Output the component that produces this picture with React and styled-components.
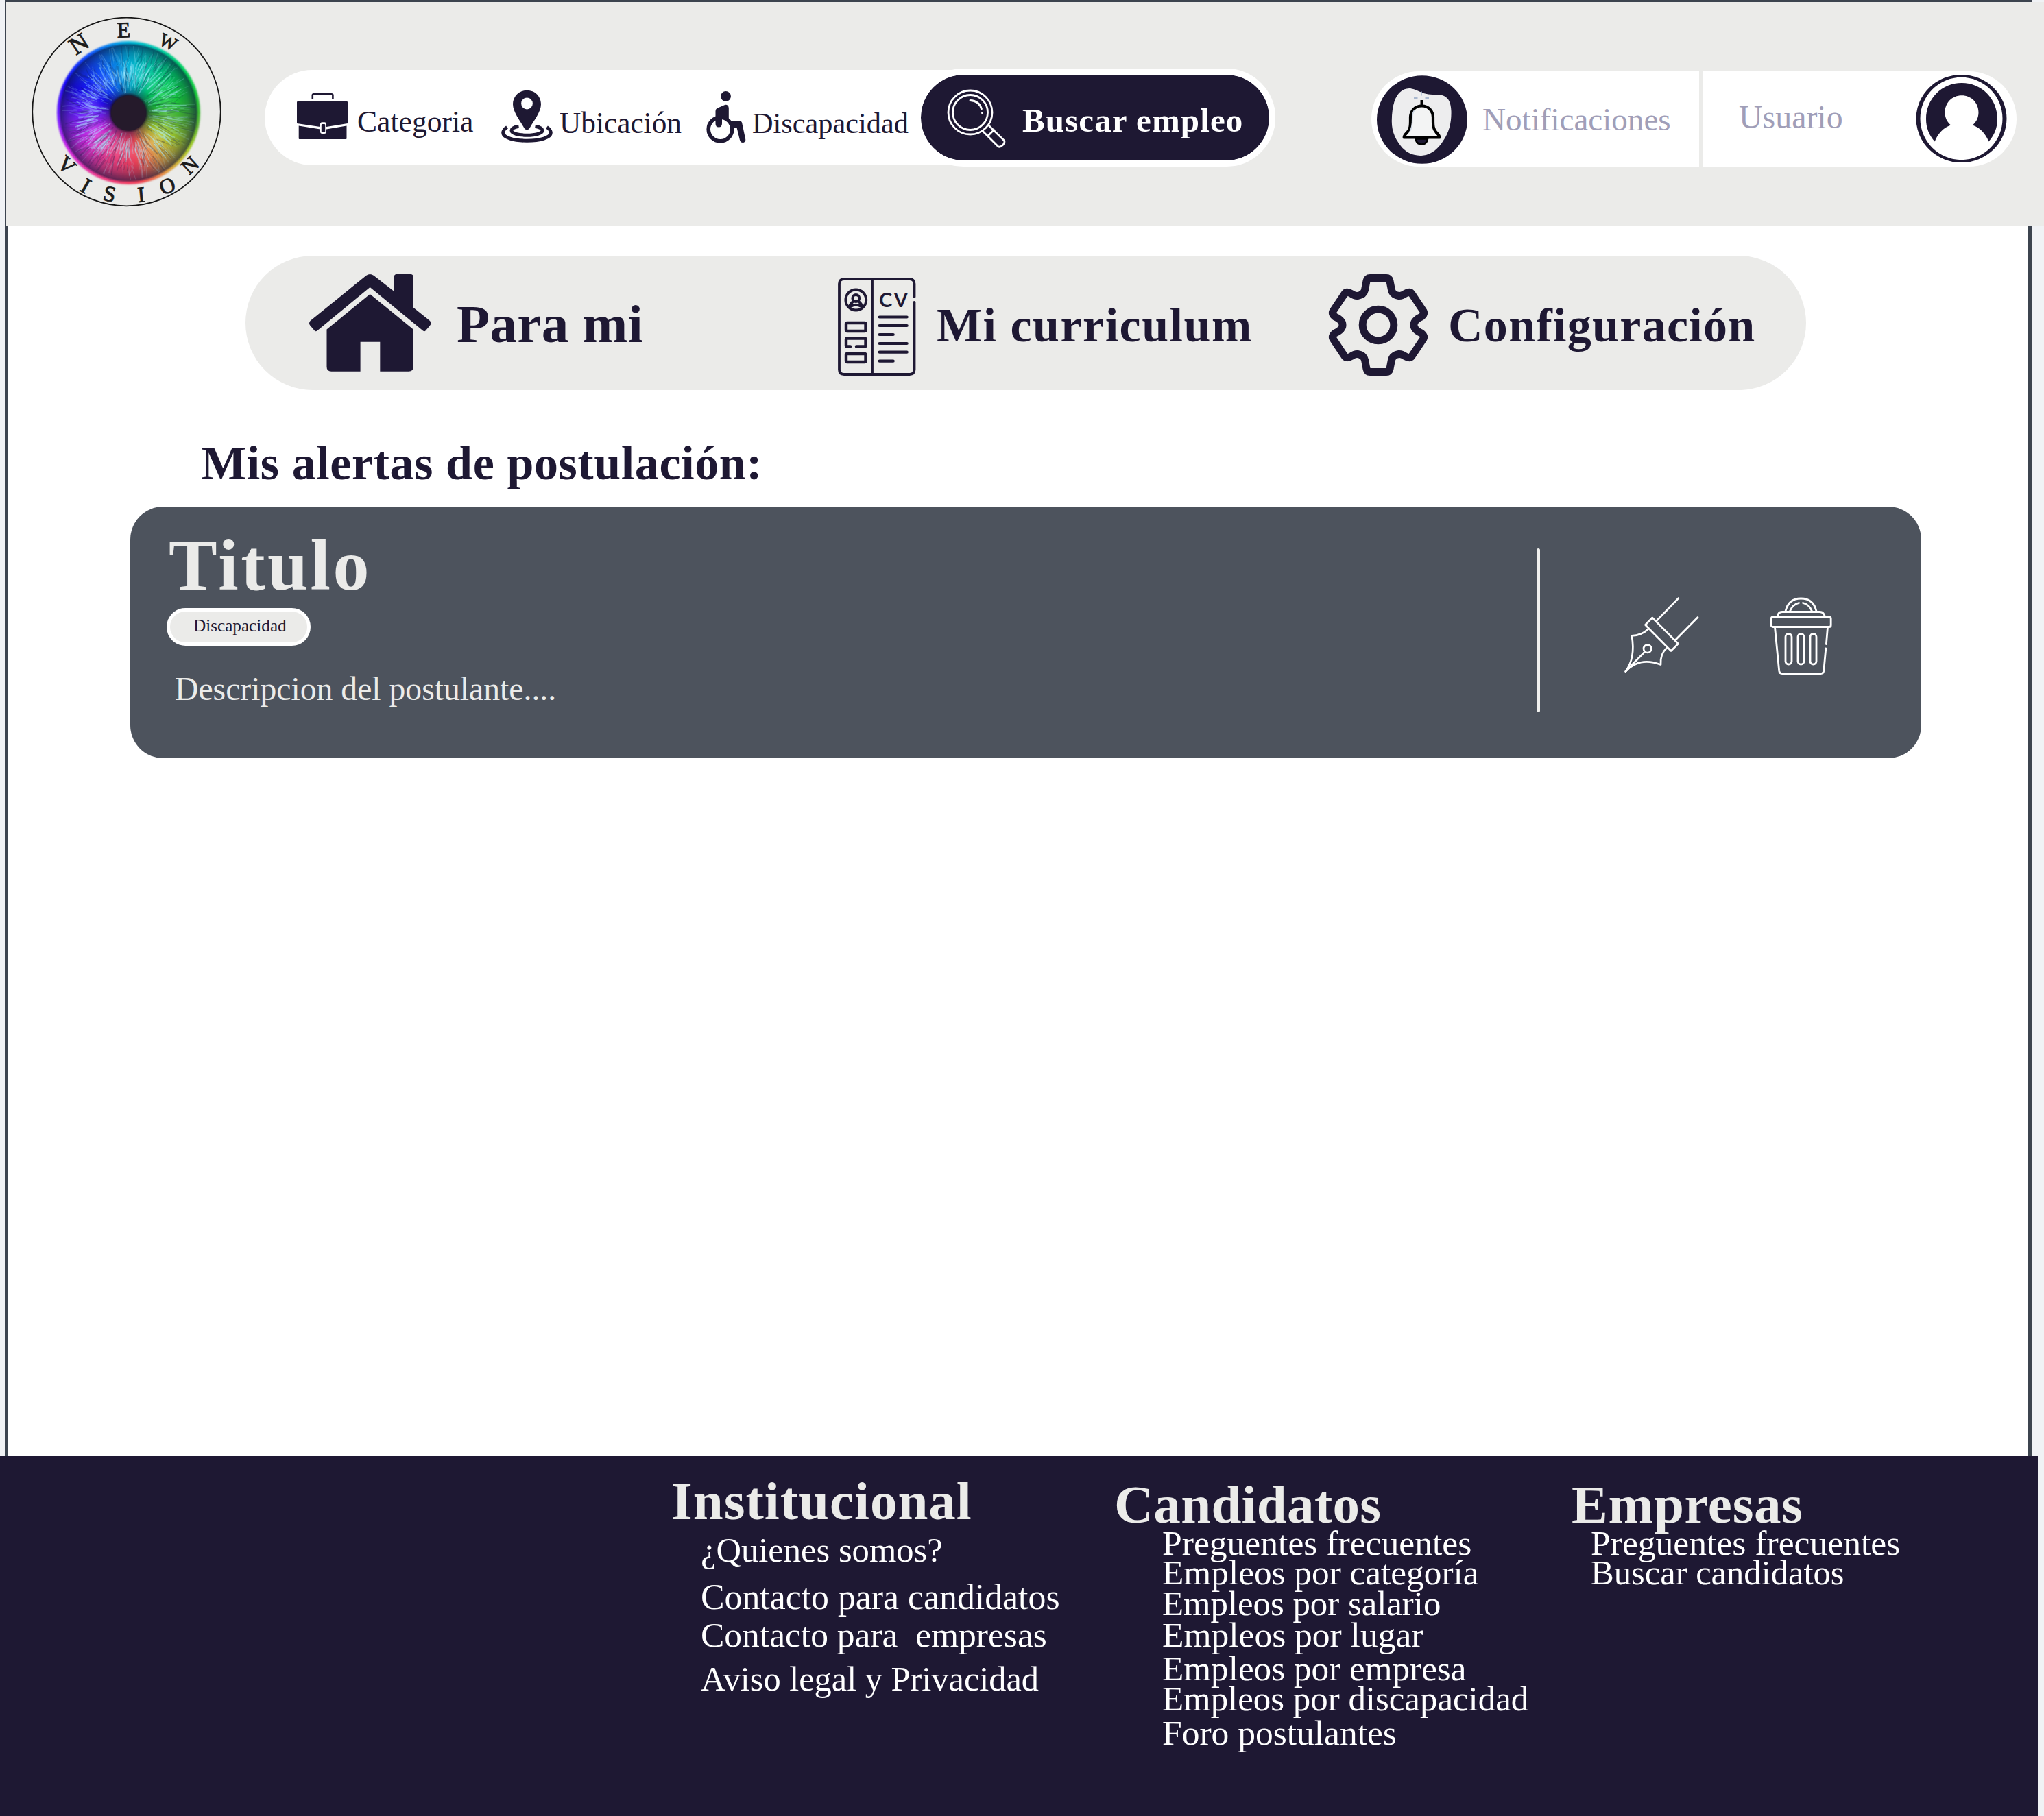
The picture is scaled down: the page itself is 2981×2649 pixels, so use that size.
import React from "react";
import styled, { createGlobalStyle } from "styled-components";

const navy = "#1e1833";
const mist = "#ebebe9";
const edge = "#3c444f";

const GlobalStyle = createGlobalStyle`
  * { box-sizing: border-box; }
  body { margin: 0; background: #f0f2f5; }
  h1, h2, h3, p, ul { margin: 0; padding: 0; }
  svg { display: block; flex: none; }
`;

const Page = styled.div`
  width: 2981px;
  height: 2649px;
  display: flex;
  flex-direction: column;
  overflow: hidden;
  background: #f0f2f5;
  color: ${navy};
  font-family: "Liberation Serif", "Times New Roman", serif;
`;

const TopRule = styled.div`
  height: 3px;
  flex: none;
  width: 2956px;
  margin-left: 7px;
  background: ${edge};
`;

const Header = styled.header`
  height: 327px;
  flex: none;
  display: flex;
  align-items: flex-start;
  margin-left: 7px;
  padding-left: 37px;
  border-left: 2px solid ${edge};
  background: ${mist};
`;

const Logo = styled.div`
  position: relative;
  width: 278px;
  height: 278px;
  margin-top: 22px;
  flex: none;
`;

const Iris = styled.div`
  position: absolute;
  left: 37px;
  top: 35px;
  width: 209px;
  height: 209px;
  border-radius: 50%;
  background: conic-gradient(
    #00b4dc, #00c8a8 25deg, #00d060 50deg, #18c838 75deg, #58b030 100deg,
    #a8cc28 120deg, #e0a040 145deg, #f04058 172deg, #ec3c88 205deg,
    #d028e0 238deg, #7a20ff 265deg, #1808f8 295deg, #1050ff 325deg, #00b4dc
  );
  filter: blur(1px);
`;

const IrisShade = styled.div`
  position: absolute;
  left: 40px;
  top: 38px;
  width: 203px;
  height: 203px;
  border-radius: 50%;
  background: radial-gradient(
    circle closest-side,
    rgba(24, 16, 40, 0.9) 25%,
    rgba(20, 20, 60, 0.45) 29%,
    rgba(20, 20, 60, 0.1) 40%,
    rgba(255, 255, 255, 0.14) 55%,
    rgba(10, 20, 60, 0.05) 72%,
    rgba(10, 20, 60, 0.28) 86%,
    rgba(10, 20, 60, 0.6) 97%,
    rgba(10, 20, 60, 0.1) 100%
  );
`;

const LogoArt = styled.svg`
  position: absolute;
  inset: 0;
`;

const Fibres = styled.g`
  filter: blur(0.6px);
`;

const LogoLetter = styled.text`
  font-family: "Liberation Serif", serif;
  font-size: ${(p) => p.$size}px;
  text-anchor: middle;
  fill: #1b1b1b;
  stroke: #1b1b1b;
  stroke-width: 0.9px;
`;

const SearchBar = styled.div`
  width: 1474px;
  height: 139px;
  flex: none;
  margin: 99px 0 0 62px;
  display: flex;
  align-items: flex-start;
  border-radius: 70px;
  background: #fff;
`;

const Filter = styled.div`
  display: flex;
  align-items: flex-start;
  flex: none;
  width: ${(p) => p.$width}px;
  padding-left: ${(p) => p.$inset || 0}px;

  svg { margin-top: ${(p) => p.$iconTop}px; }
`;

const Label = styled.span`
  white-space: pre;
  flex: none;
  font-size: ${(p) => p.$size}px;
  line-height: ${(p) => Math.floor(p.$size)}px;
  font-weight: ${(p) => (p.$bold ? 700 : 400)};
  letter-spacing: ${(p) => (p.$track ? `${p.$track}px` : "normal")};
  margin: ${(p) => p.$top}px 0 0 ${(p) => p.$left || 0}px;
  color: ${(p) => p.$tone || "inherit"};
`;

const SearchButton = styled.button`
  width: 526px;
  height: 143px;
  flex: none;
  align-self: center;
  display: flex;
  align-items: flex-start;
  padding: 20px 0 0 37px;
  border: 9px solid #fff;
  border-radius: 72px;
  background: ${navy};
  background-clip: padding-box;
  color: #fff;
  font-family: inherit;
`;

const Account = styled.div`
  width: 941px;
  height: 139px;
  flex: none;
  margin: 101px 0 0 140px;
  display: flex;
  border-radius: 70px;
  background: #fff;
`;

const AccountPart = styled.div`
  display: flex;
  align-items: flex-start;
  padding-left: ${(p) => p.$inset}px;
  ${(p) => (p.$last
    ? "flex: 1; justify-content: space-between; padding-right: 14px;"
    : `width: 483px; border-right: 5px solid ${mist};`)}

  svg { margin-top: ${(p) => p.$iconTop}px; }
`;

const Main = styled.main`
  width: 2956px;
  height: 1794px;
  flex: none;
  margin-left: 7px;
  padding-top: 43px;
  border: 0 solid ${edge};
  border-width: 0 5px;
  background: #fff;
`;

const Tabs = styled.nav`
  width: 2276px;
  height: 196px;
  margin-left: 346px;
  display: flex;
  padding-left: 93px;
  border-radius: 98px;
  background: ${mist};
`;

const Tab = styled.div`
  width: ${(p) => p.$width}px;
  flex: none;
  display: flex;
  align-items: flex-start;

  svg { margin-top: ${(p) => p.$iconTop}px; }
`;

const SectionTitle = styled.h2`
  margin: 72px 0 28px 281px;
  font-size: 70px;
  line-height: 70px;
  letter-spacing: 0.6px;
`;

const Card = styled.article`
  width: 2612px;
  height: 367px;
  margin-left: 178px;
  display: flex;
  border-radius: 48px;
  background: #4d535d;
  color: ${mist};
`;

const CardBody = styled.div`
  width: 2051px;
  flex: none;
  padding: 33px 0 0 53px;
`;

const CardTitle = styled.h3`
  margin-left: 3px;
  font-size: 106px;
  line-height: 106px;
  letter-spacing: 3.5px;
`;

const Badge = styled.div`
  width: 210px;
  height: 55px;
  margin-top: 9px;
  padding: 8px 0 0 34px;
  border: 5.5px solid #fff;
  border-radius: 28px;
  background: ${mist};
  color: ${navy};
  font-size: 25.2px;
  line-height: 25px;
`;

const CardText = styled.p`
  margin: 39px 0 0 12px;
  font-size: 47.7px;
  line-height: 47px;
`;

const Divider = styled.div`
  width: 5px;
  height: 239px;
  margin-top: 61px;
  border-radius: 3px;
  background: #f0f0ee;
`;

const Actions = styled.div`
  display: flex;
  align-items: flex-start;
  gap: 101px;
  padding: 131px 0 0 122px;
`;

const Footer = styled.footer`
  width: 2972px;
  height: 525px;
  flex: none;
  display: grid;
  grid-template-columns: 646px 667px 1fr;
  align-items: start;
  padding-left: 979px;
  background: ${navy};
`;

const Column = styled.section`
  padding-top: ${(p) => p.$top}px;
`;

const ColumnTitle = styled.h2`
  font-size: 79px;
  line-height: 68px;
  letter-spacing: ${(p) => p.$track}px;
  color: ${mist};
`;

const Links = styled.ul`
  list-style: none;
  padding-left: ${(p) => p.$indent}px;
`;

const LinkItem = styled.li`
  margin-top: ${(p) => p.$gap}px;
  font-size: ${(p) => p.$size}px;
  line-height: 36px;
  white-space: pre;
  color: #fff;
`;

const letters = [
  ["N", 70, 43, -33, 36], ["E", 134.5, 22, -2, 32], ["W", 200, 38, 26, 27],
  ["V", 51, 219, 43, 32], ["I", 79, 249, 30, 32], ["S", 114, 261, 12, 32],
  ["I", 160, 262, -5, 32], ["O", 198, 249, -20, 31], ["N", 231, 219, -42, 31],
];

const noise = (n) => {
  const v = Math.sin(n * 127.1 + 11.7) * 43758.5453;
  return v - Math.floor(v);
};

const fibres = Array.from({ length: 620 }, (_, i) => {
  const a = noise(i) * Math.PI * 2;
  const start = 28 + noise(i + 700) * 52;
  const end = Math.min(97, start + 8 + noise(i + 1400) * 22);
  const bend = a + (noise(i + 2100) - 0.5) * 0.16;
  const dark = i % 3 === 0;
  const near = Math.abs((start + end) / 2 - 58) < 14;
  return {
    d: `M${141.5 + Math.cos(a) * start} ${139.5 + Math.sin(a) * start}L${141.5 + Math.cos(bend) * end} ${139.5 + Math.sin(bend) * end}`,
    stroke: dark ? "#10204a" : "#a8ecff",
    opacity: dark ? 0.22 : near ? 0.4 : 0.15,
    width: 0.8 + noise(i + 2800) * 1.2,
  };
});

const BrandLogo = () => (
  <Logo>
    <Iris />
    <IrisShade />
    <LogoArt width="278" height="278" viewBox="0 0 278 278">
      <circle cx="138.5" cy="138" r="137.3" fill="none" stroke="#151515" strokeWidth="1.8" />
      <Fibres>
        {fibres.map((f, i) => (
          <path key={i} d={f.d} stroke={f.stroke} strokeOpacity={f.opacity} strokeWidth={f.width} strokeLinecap="round" />
        ))}
      </Fibres>
      <circle cx="141.5" cy="140" r="25.5" fill="#251a2b" />
      {letters.map(([ch, x, y, turn, size], i) => (
        <LogoLetter key={i} $size={size} transform={`translate(${x} ${y - 3}) rotate(${turn})`} y="10.5">{ch}</LogoLetter>
      ))}
    </LogoArt>
  </Logo>
);

const Briefcase = () => (
  <svg width="77" height="71" viewBox="0 0 77 71">
    <path d="M23.8 11V5q0-1.8 1.8-1.8h26q1.8 0 1.8 1.8v6" fill="none" stroke={navy} strokeWidth="2.6" />
    <path d="M1 15q0-1 1-1h72q1 0 1 1v31L44 51V47q0-2.800-2.800-2.800h-3.400Q35 44.200 35 47v4L1 46z" fill={navy} />
    <path d="M3.700 49.500L35 54.500V58q0 3 3 3h3q3 0 3-3v-3.500l29.500-5V68q0 1-1 1H4.700q-1 0-1-1z" fill={navy} />
    <rect x="36.800" y="47" width="5.400" height="12" rx="1.200" fill={navy} />
  </svg>
);

const MapPin = () => (
  <svg width="75" height="77" viewBox="0 0 75 77">
    <path d="M37.500 .8C26 .8 17 9.500 17 21c0 11 10.500 24 16 34 2.500 4.500 6.500 4.500 9 0 5.500-10 16-23 16-34C58 9.500 49 .8 37.500 .8z" fill={navy} />
    <circle cx="37.500" cy="20" r="8.400" fill="#fff" />
    <g fill="none" stroke={navy} strokeWidth="5">
      <path d="M25.500 53.200C18 54.500 15 57 15 59.200c0 4.200 10 7 22.500 7S60 63.400 60 59.200c0-2.200-3-4.700-10.500-6" />
      <path d="M8.500 54.500C4 57.500 2.700 60 2.700 62.800c0 6.800 15.300 11.400 34.800 11.400s34.800-4.600 34.800-11.400c0-2.800-1.300-5.300-5.800-8.300" />
    </g>
  </svg>
);

const Wheelchair = () => (
  <svg width="60" height="77" viewBox="0 0 60 77">
    <circle cx="29.500" cy="8.500" r="7.400" fill={navy} />
    <circle cx="21.500" cy="56.500" r="17.300" fill="none" stroke={navy} strokeWidth="5.600" />
    <path d="M27 21.500Q30 19.800 32.500 22q1.300 1.300 1.300 4V44H49q3.500 0 4.200 3.500l5 23.500q.6 4-3 5-4 .7-5.200-3.500L45.500 54H40Q34.500 41 24 39.500V48q0 5.500-4.800 5.500T14.500 48V30q0-2.500 2-4z" fill={navy} />
  </svg>
);

const Magnifier = () => (
  <svg width="88" height="88" viewBox="0 0 88 88" fill="none" stroke="#fff" strokeWidth="2.800" strokeLinecap="round" strokeLinejoin="round">
    <circle cx="35" cy="35" r="32" />
    <circle cx="35" cy="35" r="25.500" />
    <path d="M35 17.500Q48 18 51.500 30M52.500 35.500v.6" />
    <path d="M53 62l23 23q3 1 6.500-2.500T84.500 76L62 54M61 69l8.500-8.500" />
  </svg>
);

const BellBadge = () => (
  <svg width="132" height="129" viewBox="0 0 132 129">
    <ellipse cx="66" cy="64.500" rx="66" ry="64.300" fill={navy} />
    <path d="M21.800 66C22 48 25 34 32.600 25.500 38 20 45 18 51 19.500c9 2 14 6.500 24 8 8 1.200 16-.5 23 2.500 7 3.500 10 10 10.500 22 .5 16-3 31-11.500 43-7 11.500-17 20.500-30 21.700C53 118 42 112 35 103 26 92 21.500 80 21.800 66z" fill="#ededee" />
    <path d="M54 32h5.500v3H54zM70.500 32H76v3h-5.500zM64 23.500h1.800v6H64z" fill="#a9b8cf" />
    <path d="M65.500 44.500c-10.500 0-16.500 8-16.500 17 0 11 .5 16-5 22-3 3-4.500 4-4.300 7h51.600c.2-3-1.300-4-4.300-7-5.500-6-5-11-5-22 0-9-6-17-16.500-17z" fill="#f3f4f4" stroke="#000" strokeWidth="4.200" strokeLinejoin="round" />
    <path d="M65.500 36v8" stroke="#000" strokeWidth="4" />
    <path d="M54.500 51q-3 5-2.800 12 .3 13-4.200 20" fill="none" stroke="#ccd6e2" strokeWidth="1.500" />
    <path d="M56.500 92.500c1 5.500 4.500 8 8.800 8s7.800-2.500 8.800-8z" fill={navy} stroke="#000" strokeWidth="2.500" />
  </svg>
);

const UserBadge = () => (
  <svg width="132" height="128" viewBox="0 0 132 128">
    <path fillRule="evenodd" d="M65.500 0a66 64 0 1 1 0 128a66 64 0 1 1 0-128zM65.500 3.800a60 60.200 0 1 0 0 120.400a60 60.200 0 1 0 0-120.400z" fill={navy} />
    <path d="M26.700 97.500C18.500 88 14 78 14 64.500 14 35 37 12 66 12s52 23 52 52.500c0 13.500-4.500 23.500-12.700 33C101 86 93 77.500 82 73.500c5.500-5 8.500-11 8.500-18.500C90.500 41 80 30.300 66 30.300S41.500 41 41.500 55c0 7.500 3 13.500 8.500 18.500C39 77.500 31 86 26.700 97.500z" fill={navy} />
  </svg>
);

const House = () => (
  <svg width="178" height="144" viewBox="0 0 178 144" fill={navy}>
    <path d="M83 3q5.600-4 11.200 0l29.500 23V5q0-4 4-4h20q4 0 4 4v44.500L176 69q3 3.500 0 7l-6.500 7.500q-1.500 1.500-3.500 0L88.600 20 11.500 83.500q-2 1.500-3.500 0L1.500 76q-3-3.500 0-7z" />
    <path d="M88.600 30l63.200 51.500V136q0 6.700-6.700 6.700h-41.800v-43H74.600v43H32.200q-6.700 0-6.700-6.700V81.500z" />
  </svg>
);

const CvInitials = styled.text`
  font-family: Lato, sans-serif;
  font-size: 29px;
  font-weight: 700;
  letter-spacing: 2.5px;
`;

const Curriculum = () => (
  <svg width="116" height="145" viewBox="0 0 116 145" fill="none" stroke={navy} strokeWidth="3.800" strokeLinecap="round">
    <path d="M112.500 29V10q0-7-7-7H10q-7 0-7 7v125q0 7 7 7h95.500q7 0 7-7V37M51 3v139" />
    <circle cx="27.300" cy="33.500" r="15" />
    <circle cx="27.300" cy="31" r="5" />
    <path d="M17.500 44q1.500-5 6-8.500M37 44q-1.500-5-6-8.500M19.500 43q7.800-4.500 15.600 0" />
    <path d="M61.700 58.500h40M61.700 71h40M61.700 84h20M61.700 97h40M61.700 109.700h40M61.700 122.700h20" strokeWidth="4.200" />
    <rect x="13" y="67" width="28.500" height="12" rx="1.500" strokeWidth="4.400" />
    <rect x="13" y="112" width="28.500" height="12" rx="1.500" strokeWidth="4.400" />
    <path d="M19 101.500h-4.500q-1.500 0-1.500-1.500v-9q0-1.500 1.500-1.500H40q1.500 0 1.500 1.500v9q0 1.500-1.500 1.500H28" strokeWidth="4.400" />
    <CvInitials x="61" y="44" fill={navy} stroke="none">CV</CvInitials>
  </svg>
);

const Gear = () => (
  <svg width="147" height="150" viewBox="0 0 147 150" fill="none" stroke={navy} strokeWidth="11" strokeLinejoin="round">
    <path d="M61 6.500H85Q89 6.500 90 11l2.500 13Q94 31 103 32.500q4 .5 9-3 7-4 10 0L139 55q2 4-3 8-11 5-11 12t11 12q5 4 3 8l-17 25.500q-3 4-10 0-5-3.500-9-3Q94 119 92.500 126L90 139q-1 4.500-5 4.500H61q-4 0-5-4.500L53.500 126Q52 119 43 117.500q-4-.5-9 3-7 4-10 0L7 95q-2-4 3-8 11-5 11-12T10 63q-5-4-3-8L24 29.500q3-4 10 0 5 3.500 9 3Q52 31 53.500 24L56 11q1-4.500 5-4.500z" />
    <circle cx="73" cy="75" r="22.800" />
  </svg>
);

const Pen = () => (
  <svg width="112" height="113" viewBox="0 0 112 113" fill="none" stroke="#fff" strokeWidth="2.700" strokeLinecap="round" strokeLinejoin="round">
    <path d="M80 2.500L48 35.500M108 30.500L75 64M41.700 31L31.500 41.500 69 79.500 79.500 69z" />
    <path d="M36 47.500Q26 57 11.800 57.300 17.500 90 2.700 109.500 23 87.500 54 99.500 53 84 62.500 75.500" />
    <circle cx="34.700" cy="76.300" r="5.700" />
    <path d="M2.700 109.500L30.500 81" />
  </svg>
);

const Trash = () => (
  <svg width="92" height="116" viewBox="0 0 92 116" fill="none" stroke="#fff" strokeWidth="2.800" strokeLinecap="round" strokeLinejoin="round">
    <path d="M23 21.500C26 9 34 3 45.500 3S65 9 68 21.500M29.500 21.500Q33 12 42.500 9.500M48.500 9.500Q58 12 61.500 21.500" />
    <path d="M11 30Q12 22.500 18 22.500h55q6 0 7.500 7.500" />
    <rect x="2.200" y="30" width="87" height="14.500" rx="2.500" />
    <path d="M7.500 45L13.700 108.500q.6 4 4.300 4h56.500q3.700 0 4.300-4L81.800 76M84.500 45L82.400 69.500" />
    <rect x="23" y="54.500" width="9" height="44.500" rx="4.500" />
    <rect x="41" y="54.500" width="9" height="44.500" rx="4.500" />
    <rect x="59" y="54.500" width="9" height="44.500" rx="4.500" />
  </svg>
);

const footerColumns = [
  {
    title: "Institucional", top: 32, track: 1, indent: 43,
    links: [
      ["¿Quienes somos?", 19, 50.6], ["Contacto para candidatos", 33, 51.8],
      ["Contacto para  empresas", 19, 51.5], ["Aviso legal y Privacidad", 28, 50.4],
    ],
  },
  {
    title: "Candidatos", top: 37, track: 0.3, indent: 70,
    links: [
      ["Preguentes frecuentes", 4, 51.6], ["Empleos por categoría", 7, 51.3],
      ["Empleos por salario", 9, 50.8], ["Empleos por lugar", 10, 51.5],
      ["Empleos por empresa", 13, 51.2], ["Empleos por discapacidad", 8, 50.9],
      ["Foro postulantes", 14, 51.5],
    ],
  },
  {
    title: "Empresas", top: 37, track: 0.7, indent: 28,
    links: [["Preguentes frecuentes", 4, 51.6], ["Buscar candidatos", 7, 50.6]],
  },
];

export default function App() {
  return (
    <Page>
      <GlobalStyle />
      <TopRule />
      <Header>
        <BrandLogo />
        <SearchBar>
          <Filter $width={345} $inset={46} $iconTop={32}>
            <Briefcase />
            <Label $size={43.6} $top={54} $left={12}>Categoria</Label>
          </Filter>
          <Filter $width={298} $iconTop={29}>
            <MapPin />
            <Label $size={43.3} $top={56} $left={10}>Ubicación</Label>
          </Filter>
          <Filter $width={305} $iconTop={30}>
            <Wheelchair />
            <Label $size={42.3} $top={57} $left={8}>Discapacidad</Label>
          </Filter>
          <SearchButton>
            <Magnifier />
            <Label $size={49} $bold $track={1.1} $top={22} $left={23}>Buscar empleo</Label>
          </SearchButton>
        </SearchBar>
        <Account>
          <AccountPart $inset={8} $iconTop={6}>
            <BellBadge />
            <Label $size={47.1} $top={47} $left={22} $tone="#a09eb8">Notificaciones</Label>
          </AccountPart>
          <AccountPart $last $inset={53} $iconTop={5}>
            <Label $size={47.9} $top={43} $tone="#a09eb8">Usuario</Label>
            <UserBadge />
          </AccountPart>
        </Account>
      </Header>
      <Main>
        <Tabs>
          <Tab $width={770} $iconTop={26}>
            <House />
            <Label $size={79} $bold $track={0.3} $top={60} $left={37}>Para mi</Label>
          </Tab>
          <Tab $width={716} $iconTop={31}>
            <Curriculum />
            <Label $size={70} $bold $track={1.5} $top={67} $left={29}>Mi curriculum</Label>
          </Tab>
          <Tab $width={640} $iconTop={26}>
            <Gear />
            <Label $size={70} $bold $track={1.3} $top={67} $left={28}>Configuración</Label>
          </Tab>
        </Tabs>
        <SectionTitle>Mis alertas de postulación:</SectionTitle>
        <Card>
          <CardBody>
            <CardTitle>Titulo</CardTitle>
            <Badge>Discapacidad</Badge>
            <CardText>Descripcion del postulante....</CardText>
          </CardBody>
          <Divider />
          <Actions>
            <Pen />
            <Trash />
          </Actions>
        </Card>
      </Main>
      <Footer>
        {footerColumns.map((col) => (
          <Column key={col.title} $top={col.top}>
            <ColumnTitle $track={col.track}>{col.title}</ColumnTitle>
            <Links $indent={col.indent}>
              {col.links.map(([text, gap, size]) => (
                <LinkItem key={text} $gap={gap} $size={size}>{text}</LinkItem>
              ))}
            </Links>
          </Column>
        ))}
      </Footer>
    </Page>
  );
}
